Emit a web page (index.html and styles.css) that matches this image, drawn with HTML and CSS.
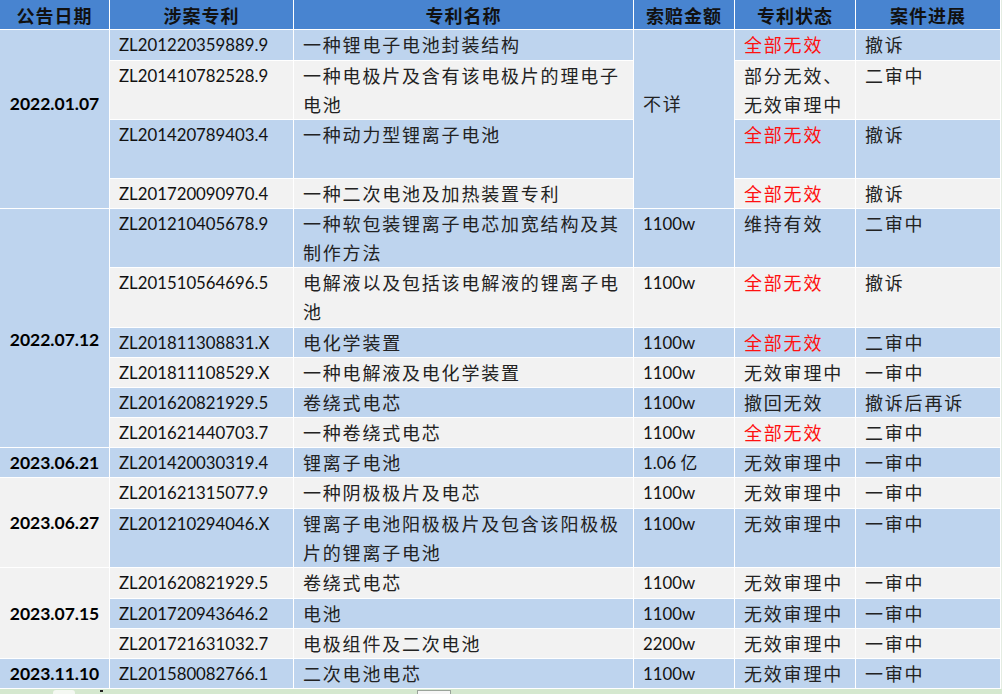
FILE: index.html
```html
<!DOCTYPE html>
<html lang="zh">
<head>
<meta charset="utf-8">
<title>专利诉讼一览</title>
<link rel="stylesheet" href="styles.css">
</head>
<body>
<table class="grid">
  <colgroup>
    <col class="c-date"><col class="c-no"><col class="c-name"><col class="c-amt"><col class="c-state"><col class="c-prog">
  </colgroup>
  <thead>
    <tr class="head">
      <th>公告日期</th><th>涉案专利</th><th>专利名称</th><th>索赔金额</th><th>专利状态</th><th>案件进展</th>
    </tr>
  </thead>
  <tbody>
    <tr class="b h31">
      <td class="date blue up" rowspan="4">2022.01.07</td>
      <td class="no">ZL201220359889.9</td>
      <td class="zh">一种锂电子电池封装结构</td>
      <td class="zh blue mid up" rowspan="4">不详</td>
      <td class="zh red">全部无效</td>
      <td class="zh">撤诉</td>
    </tr>
    <tr class="g h59">
      <td class="no">ZL201410782528.9</td>
      <td class="zh">一种电极片及含有该电极片的理电子<br>电池</td>
      <td class="zh">部分无效、<br>无效审理中</td>
      <td class="zh">二审中</td>
    </tr>
    <tr class="b h59">
      <td class="no">ZL201420789403.4</td>
      <td class="zh">一种动力型锂离子电池</td>
      <td class="zh red">全部无效</td>
      <td class="zh">撤诉</td>
    </tr>
    <tr class="g h30">
      <td class="no">ZL201720090970.4</td>
      <td class="zh">一种二次电池及加热装置专利</td>
      <td class="zh red">全部无效</td>
      <td class="zh">撤诉</td>
    </tr>
    <tr class="b h59">
      <td class="date blue down" rowspan="6">2022.07.12</td>
      <td class="no">ZL201210405678.9</td>
      <td class="zh">一种软包装锂离子电芯加宽结构及其<br>制作方法</td>
      <td class="no">1100w</td>
      <td class="zh">维持有效</td>
      <td class="zh">二审中</td>
    </tr>
    <tr class="g h60">
      <td class="no">ZL201510564696.5</td>
      <td class="zh">电解液以及包括该电解液的锂离子电<br>池</td>
      <td class="no">1100w</td>
      <td class="zh red">全部无效</td>
      <td class="zh">撤诉</td>
    </tr>
    <tr class="b h30">
      <td class="no">ZL201811308831.X</td>
      <td class="zh">电化学装置</td>
      <td class="no">1100w</td>
      <td class="zh red">全部无效</td>
      <td class="zh">二审中</td>
    </tr>
    <tr class="g h30">
      <td class="no">ZL201811108529.X</td>
      <td class="zh">一种电解液及电化学装置</td>
      <td class="no">1100w</td>
      <td class="zh">无效审理中</td>
      <td class="zh">一审中</td>
    </tr>
    <tr class="b h30">
      <td class="no">ZL201620821929.5</td>
      <td class="zh">卷绕式电芯</td>
      <td class="no">1100w</td>
      <td class="zh">撤回无效</td>
      <td class="zh">撤诉后再诉</td>
    </tr>
    <tr class="g h30">
      <td class="no">ZL201621440703.7</td>
      <td class="zh">一种卷绕式电芯</td>
      <td class="no">1100w</td>
      <td class="zh red">全部无效</td>
      <td class="zh">二审中</td>
    </tr>
    <tr class="b h30">
      <td class="date blue">2023.06.21</td>
      <td class="no">ZL201420030319.4</td>
      <td class="zh">锂离子电池</td>
      <td class="no">1.06 亿</td>
      <td class="zh">无效审理中</td>
      <td class="zh">一审中</td>
    </tr>
    <tr class="g h31">
      <td class="date grey" rowspan="2">2023.06.27</td>
      <td class="no">ZL201621315077.9</td>
      <td class="zh">一种阴极极片及电芯</td>
      <td class="no">1100w</td>
      <td class="zh">无效审理中</td>
      <td class="zh">一审中</td>
    </tr>
    <tr class="b h59">
      <td class="no">ZL201210294046.X</td>
      <td class="zh">锂离子电池阳极极片及包含该阳极极<br>片的锂离子电池</td>
      <td class="no">1100w</td>
      <td class="zh">无效审理中</td>
      <td class="zh">一审中</td>
    </tr>
    <tr class="g h31">
      <td class="date grey" rowspan="3">2023.07.15</td>
      <td class="no">ZL201620821929.5</td>
      <td class="zh">卷绕式电芯</td>
      <td class="no">1100w</td>
      <td class="zh">无效审理中</td>
      <td class="zh">一审中</td>
    </tr>
    <tr class="b h30">
      <td class="no">ZL201720943646.2</td>
      <td class="zh">电池</td>
      <td class="no">1100w</td>
      <td class="zh">无效审理中</td>
      <td class="zh">一审中</td>
    </tr>
    <tr class="g h30">
      <td class="no">ZL201721631032.7</td>
      <td class="zh">电极组件及二次电池</td>
      <td class="no">2200w</td>
      <td class="zh">无效审理中</td>
      <td class="zh">一审中</td>
    </tr>
    <tr class="b h30">
      <td class="date blue">2023.11.10</td>
      <td class="no">ZL201580082766.1</td>
      <td class="zh">二次电池电芯</td>
      <td class="no">1100w</td>
      <td class="zh">无效审理中</td>
      <td class="zh">一审中</td>
    </tr>
  </tbody>
</table>
<div class="strip">
  <span class="tab"></span>
  <span class="mark"></span>
  <span class="box"></span>
</div>
</body>
</html>
```

FILE: styles.css
```css
html, body {
  margin: 0;
  padding: 0;
}
body {
  background: #e4ece2;
  width: 1002px;
  height: 694px;
  overflow: hidden;
  font-family: "Lato", "Noto Sans CJK SC", sans-serif;
  color: #111;
}
.grid {
  table-layout: fixed;
  width: 1001px;
  border-collapse: separate;
  border-spacing: 0;
  background: #ffffff;
}
.c-date { width: 110px; }
.c-no { width: 184px; }
.c-name { width: 340px; }
.c-amt { width: 101px; }
.c-state { width: 121px; }
.c-prog { width: 145px; }

.grid th, .grid td {
  box-sizing: border-box;
  border-right: 1px solid #ffffff;
  border-bottom: 1px solid #ffffff;
  padding: 0 0 0 9px;
  vertical-align: top;
  text-align: left;
  line-height: 29px;
  white-space: nowrap;
  overflow: hidden;
}
.head { height: 30px; }
.grid th {
  background: #4884d0;
  color: #111;
  font-family: "Noto Sans CJK SC", sans-serif;
  font-weight: 700;
  font-size: 18px;
  letter-spacing: 1px;
  text-align: center;
  vertical-align: middle;
  line-height: 28px;
  padding: 0;
}
.h30 { height: 30px; }
.h31 { height: 31px; }
.h59 { height: 59px; }
.h60 { height: 60px; }

.b td { background: #bed4ee; }
.g td { background: #f2f2f2; }
.grid td.blue { background: #bed4ee; }
.grid td.grey { background: #f2f2f2; }

.no {
  font-size: 16.8px;
  color: #111;
}
.zh {
  font-family: "Noto Sans CJK SC", sans-serif;
  font-size: 18px;
  letter-spacing: 1.8px;
  color: #222;
}
.red { color: #ff1010; }

.grid td.date {
  font-weight: 700;
  font-size: 17.5px;
  text-align: center;
  vertical-align: middle;
  padding: 0;
  color: #000;
}
.grid td.mid { vertical-align: middle; }
.grid td.up { padding-bottom: 32px; }
.grid td.down { padding-top: 22px; }

.strip {
  position: relative;
  height: 6px;
  background: #d5e8cf;
}
.strip .tab {
  position: absolute;
  left: 53px;
  top: 1px;
  width: 22px;
  height: 5px;
  background: #f4f8f2;
  border-radius: 3px 3px 0 0;
}
.strip .mark {
  position: absolute;
  left: 100px;
  top: 1px;
  width: 3px;
  height: 2px;
  background: #222;
}
.strip .box {
  position: absolute;
  left: 417px;
  top: 1px;
  width: 34px;
  height: 5px;
  background: #f6f6f6;
  border: 1px solid #9aa39a;
  border-bottom: none;
  box-sizing: border-box;
}
```
